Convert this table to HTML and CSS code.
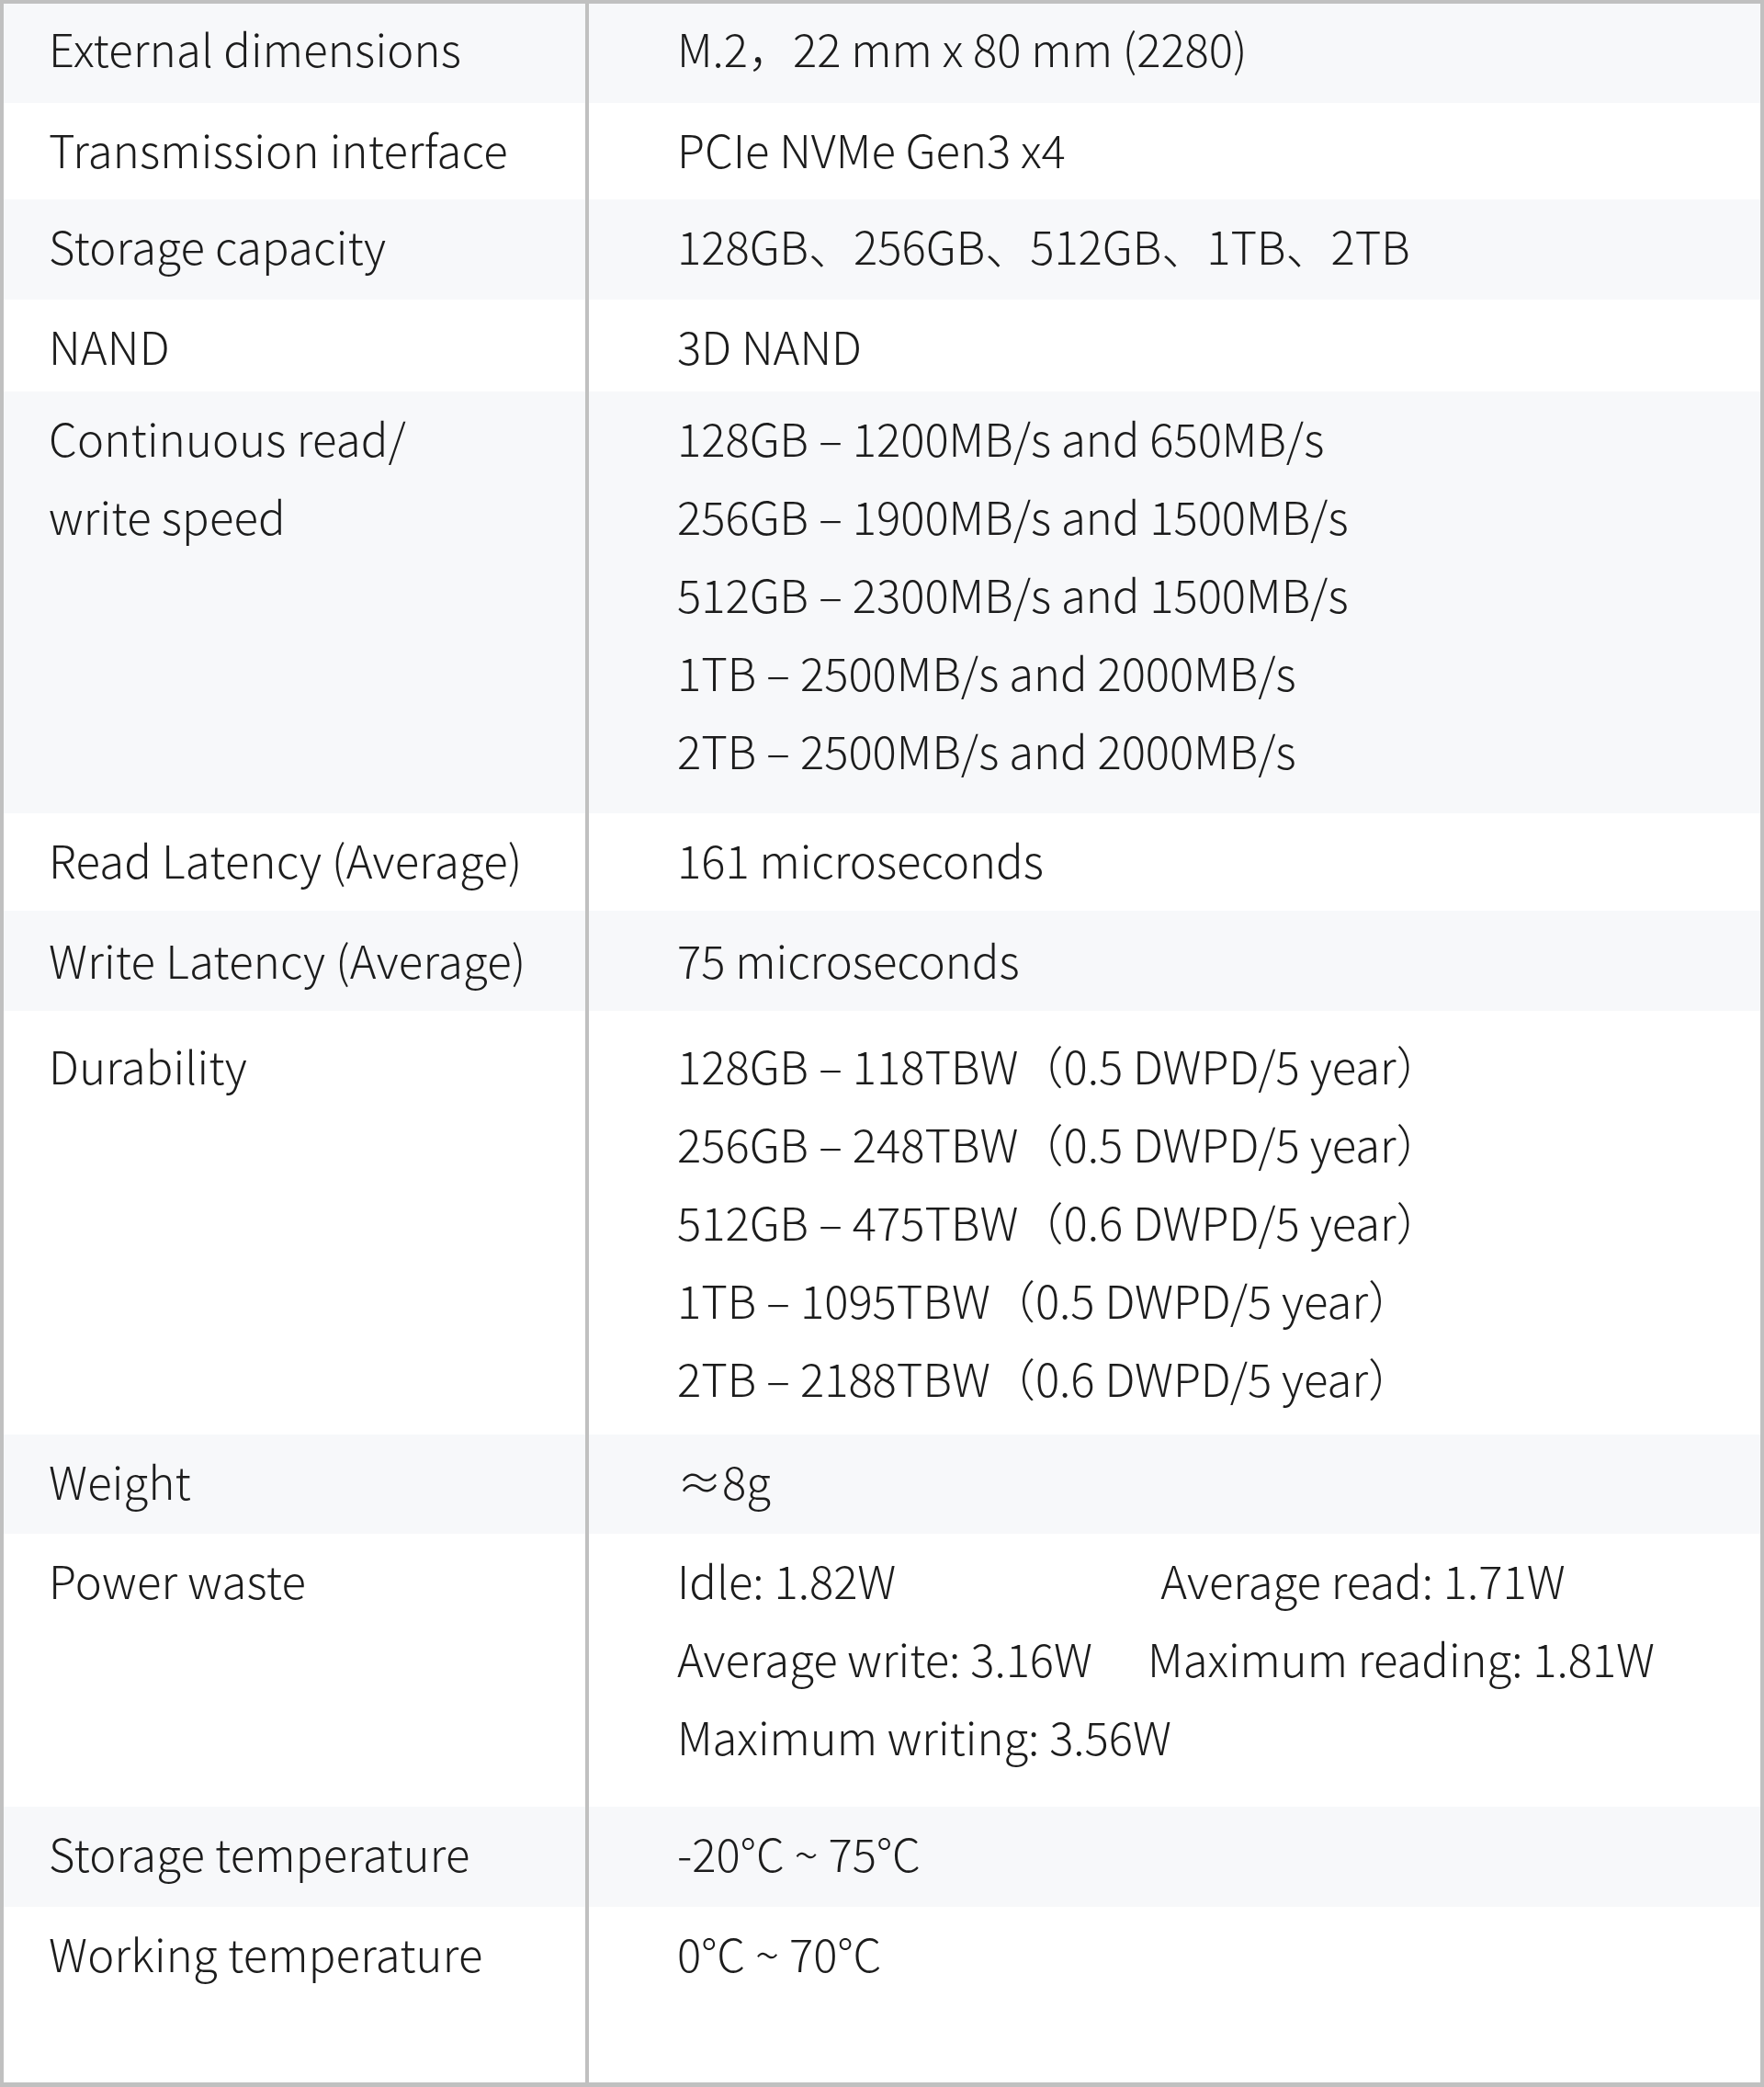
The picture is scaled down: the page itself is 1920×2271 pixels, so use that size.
FILE: index.html
```html
<!DOCTYPE html>
<html lang="en">
<head>
<meta charset="utf-8">
<title>Specifications</title>
<link rel="stylesheet" href="styles.css">
</head>
<body>
<div class="spec">
  <div class="k alt first">External dimensions</div>
  <div class="v alt first">M.2，22 mm x 80 mm (2280)</div>

  <div class="k">Transmission interface</div>
  <div class="v">PCIe NVMe Gen3 x4</div>

  <div class="k alt">Storage capacity</div>
  <div class="v alt">128GB、256GB、512GB、1TB、2TB</div>

  <div class="k">NAND</div>
  <div class="v">3D NAND</div>

  <div class="k alt">Continuous read/<br>write speed</div>
  <div class="v alt">
    <div>128GB – 1200MB/s and 650MB/s</div>
    <div>256GB – 1900MB/s and 1500MB/s</div>
    <div>512GB – 2300MB/s and 1500MB/s</div>
    <div>1TB – 2500MB/s and 2000MB/s</div>
    <div>2TB – 2500MB/s and 2000MB/s</div>
  </div>

  <div class="k">Read Latency (Average)</div>
  <div class="v">161 microseconds</div>

  <div class="k alt low">Write Latency (Average)</div>
  <div class="v alt low">75 microseconds</div>

  <div class="k lower">Durability</div>
  <div class="v lower">
    <div>128GB – 118TBW（0.5 DWPD/5 year）</div>
    <div>256GB – 248TBW（0.5 DWPD/5 year）</div>
    <div>512GB – 475TBW（0.6 DWPD/5 year）</div>
    <div>1TB – 1095TBW（0.5 DWPD/5 year）</div>
    <div>2TB – 2188TBW（0.6 DWPD/5 year）</div>
  </div>

  <div class="k alt">Weight</div>
  <div class="v alt">≈8g</div>

  <div class="k">Power waste</div>
  <div class="v">
    <div>Idle: 1.82W<span class="gap-a">Average read: 1.71W</span></div>
    <div>Average write: 3.16W<span class="gap-b">Maximum reading: 1.81W</span></div>
    <div>Maximum writing: 3.56W</div>
  </div>

  <div class="k alt">Storage temperature</div>
  <div class="v alt">-20°C ~ 75°C</div>

  <div class="k">Working temperature</div>
  <div class="v">0°C ~ 70°C</div>
</div>
</body>
</html>
```

FILE: styles.css
```css
html, body {
  margin: 0;
  padding: 0;
  background: #ffffff;
}

.spec {
  width: 1920px;
  box-sizing: border-box;
  border: 4px solid #c0c0c0;
  border-bottom-width: 5px;
  display: grid;
  grid-template-columns: 637px 1fr;
  grid-template-rows: 108px 105px 109px 100px 459px 106px 109px 461px 108px 297px 109px 191px;
  font-family: "Noto Sans CJK SC Light", "Noto Sans CJK SC DemiLight", "Noto Sans CJK SC", "Noto Sans", sans-serif;
  font-weight: 300;
  font-size: 49px;
  line-height: 85px;
  color: #1c1c1c;
}

.k,
.v {
  padding-top: 7px;
  background: #ffffff;
  white-space: nowrap;
}

.k {
  padding-left: 49px;
  border-right: 4px solid #c0c0c0;
  letter-spacing: 0.2px;
}

.v {
  padding-left: 96px;
}

.alt {
  background: #f7f8fa;
}

.first {
  padding-top: 5px;
}

.low {
  padding-top: 10px;
}

.lower {
  padding-top: 16px;
}

.gap-a {
  margin-left: 288px;
}

.gap-b {
  margin-left: 60px;
}
```
